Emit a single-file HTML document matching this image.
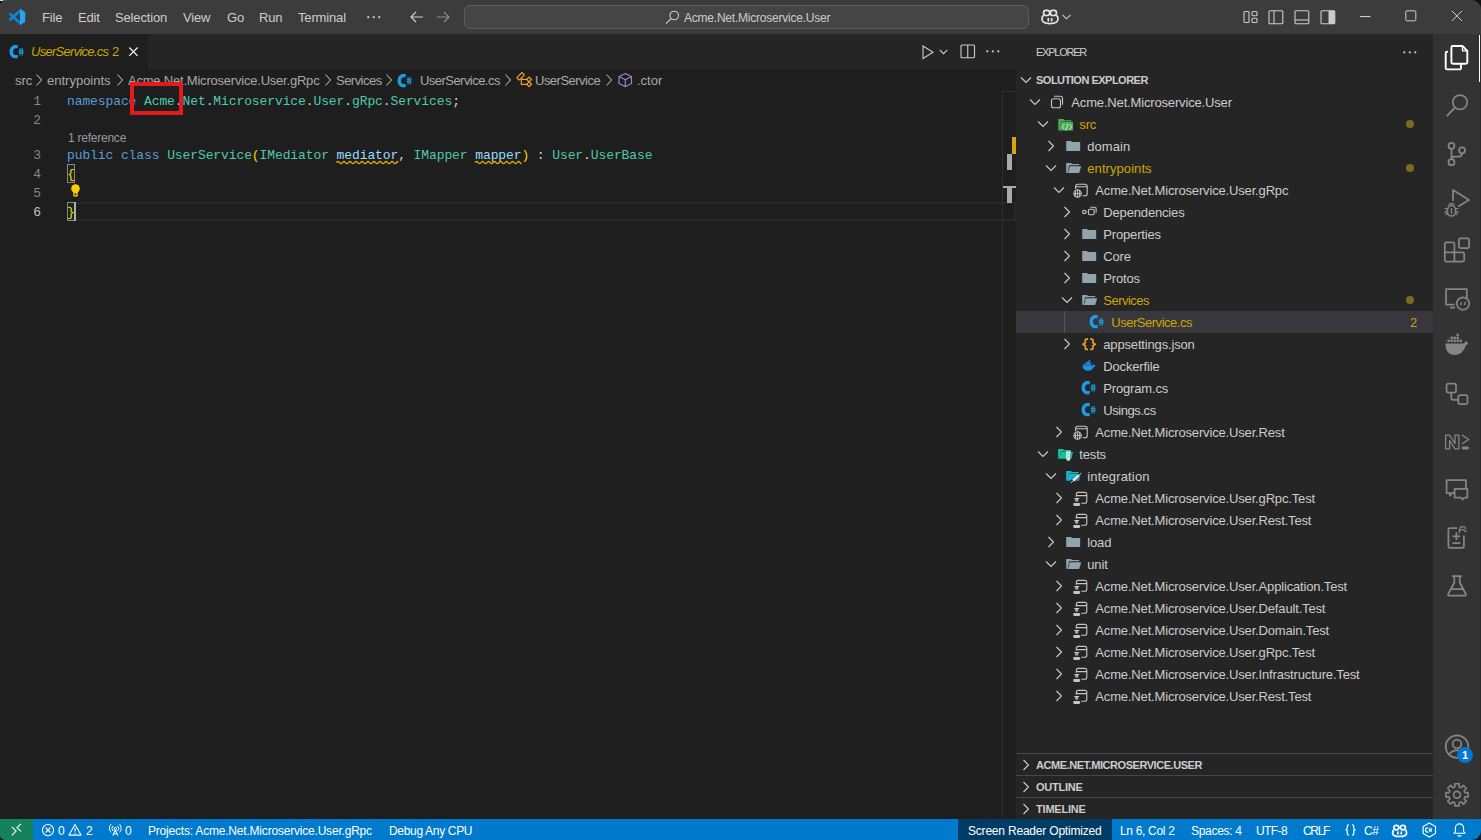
<!DOCTYPE html>
<html><head><meta charset="utf-8">
<style>
*{margin:0;padding:0;box-sizing:border-box}
html,body{width:1481px;height:840px;overflow:hidden;background:#1e1e1e;font-family:"Liberation Sans",sans-serif;color:#cccccc}
.a{position:absolute;white-space:nowrap}
svg{position:absolute;overflow:visible}
#title{position:absolute;left:0;top:0;width:1481px;height:34px;background:#3c3c3c}
.menu{font-size:13px;color:#cccccc;top:9px;line-height:18px;letter-spacing:-0.15px}
#tabs{position:absolute;left:0;top:34px;width:1016px;height:35px;background:#252526}
#tab{position:absolute;left:0;top:0;width:148px;height:35px;background:#1e1e1e}
#side{position:absolute;left:1016px;top:34px;width:417px;height:785px;background:#252526}
#act{position:absolute;left:1433px;top:34px;width:48px;height:785px;background:#333333}
#status{position:absolute;left:0;top:819px;width:1481px;height:21px;background:#007acc}
.st{font-size:12px;color:#ffffff;top:0;line-height:21px;letter-spacing:-0.2px;margin-top:2px}
.bc{font-size:13px;color:#a9a9a9;top:72px;line-height:18px}
.code{font-family:"Liberation Mono",monospace;font-size:13px;letter-spacing:-0.1px;line-height:19px;left:67px}
.ln{font-family:"Liberation Mono",monospace;font-size:13px;letter-spacing:-0.1px;line-height:19px;color:#858585;width:41px;text-align:right;left:0}
.row{font-size:13px;color:#cccccc;line-height:22px;letter-spacing:-0.16px;margin-top:1px}
.kw{color:#569cd6}.ty{color:#4ec9b0}.pa{color:#9cdcfe}.pu{color:#d4d4d4}.br{color:#ffd700}
.sq{text-decoration:underline wavy #cca700;text-decoration-thickness:1px;text-underline-offset:3px}
.ico{stroke:#c5c5c5;fill:none;stroke-width:1}
.sechdr{font-size:11px;font-weight:bold;color:#cccccc;line-height:22px;letter-spacing:-0.5px;margin-top:1px}
</style></head><body>



<!-- TITLE BAR -->
<div id="title"></div>
<div class="a" style="left:1471px;top:0;width:10px;height:10px;background:#111111"></div>
<div class="a" style="left:1461px;top:0;width:20px;height:20px;background:#3c3c3c;border-top-right-radius:9px"></div>
<div class="a" style="left:0;top:0;width:3px;height:1px;background:#e0e0e0"></div>
<div class="a" style="left:4px;top:0;width:2px;height:1px;background:#5a5a5a"></div>
<div class="a" style="left:0;top:1px;width:2px;height:2px;background:#101010"></div>
<!-- vscode logo -->
<svg style="left:9px;top:9px" width="16" height="16" viewBox="0 0 16 16">
  <path d="M1.3 5.2 L11.6 14.6" stroke="#0b84d6" stroke-width="2.7" stroke-linecap="round"/>
  <path d="M1.3 10.6 L11.6 1.3" stroke="#0b84d6" stroke-width="2.7" stroke-linecap="round"/>
  <path d="M11 0.1 L15.4 2.4 Q16.2 2.8 16.2 3.6 V12.4 Q16.2 13.2 15.4 13.6 L11 15.9 Z" fill="#23a6f2"/>
</svg>
<div class="a menu" style="left:42px">File</div>
<div class="a menu" style="left:78px">Edit</div>
<div class="a menu" style="left:115px">Selection</div>
<div class="a menu" style="left:183px">View</div>
<div class="a menu" style="left:227px">Go</div>
<div class="a menu" style="left:259px">Run</div>
<div class="a menu" style="left:298px">Terminal</div>
<svg style="left:367px;top:16px" width="14" height="3"><circle cx="1.2" cy="1.2" r="1.1" fill="#cccccc"/><circle cx="6.7" cy="1.2" r="1.1" fill="#cccccc"/><circle cx="12.2" cy="1.2" r="1.1" fill="#cccccc"/></svg>
<!-- nav arrows -->
<svg style="left:409px;top:10px" width="16" height="14" viewBox="0 0 16 14"><path d="M14 7 H2 M7 2 L2 7 L7 12" stroke="#cccccc" stroke-width="1.2" fill="none"/></svg>
<svg style="left:435px;top:10px" width="16" height="14" viewBox="0 0 16 14"><path d="M2 7 H14 M9 2 L14 7 L9 12" stroke="#8b8b8b" stroke-width="1.2" fill="none"/></svg>
<!-- search box -->
<div class="a" style="left:464px;top:5px;width:565px;height:24px;border:1px solid #5d5d5d;border-radius:6px;background:#454545"></div>
<svg style="left:665px;top:10px" width="15" height="14" viewBox="0 0 15 14"><circle cx="9.2" cy="5.5" r="4.3" stroke="#cccccc" stroke-width="1.1" fill="none"/><path d="M6.2 8.6 L1 13.6" stroke="#cccccc" stroke-width="1.2"/></svg>
<div class="a" style="left:684px;top:10px;font-size:12px;line-height:16px;color:#cccccc;letter-spacing:-0.22px">Acme.Net.Microservice.User</div>
<!-- copilot -->
<svg style="left:1041px;top:9px" width="18" height="16" viewBox="0 0 18 16">
  <path d="M2.6 6.2 C1.4 7 1 8.3 1 10 C1 13.3 4.2 14.6 9 14.6 C13.8 14.6 17 13.3 17 10 C17 8.3 16.6 7 15.4 6.2" stroke="#e6e6e6" stroke-width="1.7" fill="none"/>
  <rect x="2.6" y="1.3" width="6" height="5.2" rx="2.3" stroke="#e6e6e6" stroke-width="1.7" fill="none"/>
  <rect x="9.4" y="1.3" width="6" height="5.2" rx="2.3" stroke="#e6e6e6" stroke-width="1.7" fill="none"/>
  <path d="M7.3 9 V12.6 M10.7 9 V12.6" stroke="#e6e6e6" stroke-width="1.7"/>
</svg>
<svg style="left:1062px;top:14px" width="9" height="6" viewBox="0 0 9 6"><path d="M0.5 0.8 L4.5 4.8 L8.5 0.8" stroke="#cccccc" stroke-width="1.1" fill="none"/></svg>
<!-- layout icons -->
<svg style="left:1243px;top:10px" width="15" height="14" viewBox="0 0 15 14"><rect x="1" y="1.5" width="5" height="11" rx="1" class="ico" style="stroke:#cccccc;stroke-width:1.1"/><rect x="9" y="1.5" width="5" height="4.3" rx="1" class="ico" style="stroke:#cccccc;stroke-width:1.1"/><rect x="9" y="8.2" width="5" height="4.3" rx="1" class="ico" style="stroke:#cccccc;stroke-width:1.1"/></svg>
<svg style="left:1268px;top:10px" width="16" height="15" viewBox="0 0 16 15"><rect x="1" y="0.8" width="13.8" height="13" rx="1" class="ico" style="stroke:#cccccc;stroke-width:1.1"/><path d="M6 0.8 V13.8" stroke="#cccccc" stroke-width="1.1"/></svg>
<svg style="left:1294px;top:10px" width="16" height="15" viewBox="0 0 16 15"><rect x="1" y="0.8" width="13.8" height="13" rx="1" class="ico" style="stroke:#cccccc;stroke-width:1.1"/><path d="M1 10 H14.8" stroke="#cccccc" stroke-width="1.1"/></svg>
<svg style="left:1320px;top:10px" width="16" height="15" viewBox="0 0 16 15"><rect x="1" y="0.8" width="13.8" height="13" rx="1" class="ico" style="stroke:#cccccc;stroke-width:1.1"/><rect x="8.5" y="0.8" width="6.3" height="13" fill="#cccccc"/></svg>
<!-- window controls -->
<svg style="left:1360px;top:16px" width="11" height="2"><rect x="0" y="0" width="10.5" height="1.1" fill="#cccccc"/></svg>
<svg style="left:1405px;top:10px" width="12" height="12" viewBox="0 0 12 12"><rect x="0.8" y="0.8" width="10" height="10" rx="1.2" stroke="#cccccc" stroke-width="1" fill="none"/></svg>
<svg style="left:1451px;top:10px" width="12" height="12" viewBox="0 0 12 12"><path d="M0.8 0.8 L11 11 M11 0.8 L0.8 11" stroke="#cccccc" stroke-width="1"/></svg>

<!-- TABS -->
<div id="tabs"><div id="tab"></div></div>
<svg style="left:10.4px;top:43.8px" width="16" height="16" viewBox="0 0 16 16"><path d="M7.7 1 H5.6 C2.1 1 -0.4 3.7 -0.4 7.65 C-0.4 11.6 2.1 14.3 5.6 14.3 H7.7 V11.1 H5.8 C4.2 11.1 3 9.7 3 7.65 C3 5.6 4.2 4.2 5.8 4.2 H7.7 Z" fill="#1b9de6"/>
  <path d="M10.1 4.1 V11.4 M12.2 4.1 V11.4 M8.6 6.75 H13.7 M8.6 8.7 H13.7" stroke="#1b9de6" stroke-width="1.1"/></svg>
<div class="a" style="left:31px;top:43px;font-size:13px;line-height:18px;font-style:italic;color:#cca700;letter-spacing:-0.72px">UserService.cs</div>
<div class="a" style="left:112px;top:43px;font-size:13px;line-height:18px;color:#cca700">2</div>
<svg style="left:128px;top:46px" width="11" height="11" viewBox="0 0 11 11"><path d="M1.3 1.5 L9.6 9.8 M9.6 1.5 L1.3 9.8" stroke="#ffffff" stroke-width="1.15"/></svg>
<!-- editor actions -->
<svg style="left:922px;top:45px" width="12" height="15" viewBox="0 0 12 15"><path d="M1 1 L11 7.2 L1 13.5 Z" stroke="#cccccc" stroke-width="1.1" fill="none"/></svg>
<svg style="left:939px;top:49px" width="10" height="6" viewBox="0 0 10 6"><path d="M0.8 0.8 L4.5 4.6 L8.3 0.8" stroke="#cccccc" stroke-width="1.1" fill="none"/></svg>
<svg style="left:960px;top:44px" width="16" height="15" viewBox="0 0 16 15"><rect x="1" y="1" width="13.5" height="12.8" rx="1" stroke="#cccccc" stroke-width="1.1" fill="none"/><path d="M7.75 1 V13.8" stroke="#cccccc" stroke-width="1.1"/></svg>
<svg style="left:986px;top:50px" width="14" height="3"><circle cx="1.3" cy="1.3" r="1.1" fill="#cccccc"/><circle cx="6.8" cy="1.3" r="1.1" fill="#cccccc"/><circle cx="12.3" cy="1.3" r="1.1" fill="#cccccc"/></svg>

<!-- BREADCRUMBS -->
<svg style="left:398.3px;top:73px" width="16" height="16" viewBox="0 0 16 16"><path d="M7.7 1 H5.6 C2.1 1 -0.4 3.7 -0.4 7.65 C-0.4 11.6 2.1 14.3 5.6 14.3 H7.7 V11.1 H5.8 C4.2 11.1 3 9.7 3 7.65 C3 5.6 4.2 4.2 5.8 4.2 H7.7 Z" fill="#1b9de6"/>
  <path d="M10.1 4.1 V11.4 M12.2 4.1 V11.4 M8.6 6.75 H13.7 M8.6 8.7 H13.7" stroke="#1b9de6" stroke-width="1.1"/></svg>
<div class="a bc" style="left:15px">src</div>
<div class="a bc" style="left:47px">entrypoints</div>
<div class="a bc" style="left:128px;letter-spacing:-0.21px">Acme.Net.Microservice.User.gRpc</div>
<div class="a bc" style="left:336px;letter-spacing:-0.53px">Services</div>
<div class="a bc" style="left:420px;letter-spacing:-0.54px">UserService.cs</div>
<div class="a bc" style="left:535px;letter-spacing:-0.51px">UserService</div>
<div class="a bc" style="left:637px">.ctor</div>
<svg style="left:0;top:0" width="700" height="95" viewBox="0 0 700 95">
  <g stroke="#a9a9a9" stroke-width="1.1" fill="none">
    <path d="M36.5 74.5 L41.5 80 L36.5 85.5"/>
    <path d="M117.5 74.5 L122.5 80 L117.5 85.5"/>
    <path d="M325.5 74.5 L330.5 80 L325.5 85.5"/>
    <path d="M386.5 74.5 L391.5 80 L386.5 85.5"/>
    <path d="M505.5 74.5 L510.5 80 L505.5 85.5"/>
    <path d="M606.5 74.5 L611.5 80 L606.5 85.5"/>
  </g>
  <!-- class icon -->
  <g stroke="#ee9d28" stroke-width="1.2" fill="none">
    <rect x="516.9" y="74.6" width="7.4" height="3.4" rx="0.4" transform="rotate(-45 520.6 76.3)"/>
    <path d="M521.3 78.3 V84.3 H527.2 M521.3 79.4 H527.2"/>
    <rect x="527.4" y="77.8" width="3.4" height="3.4" transform="rotate(45 529.1 79.5)"/>
    <rect x="527.4" y="82.6" width="3.4" height="3.4" transform="rotate(45 529.1 84.3)"/>
  </g>
  <!-- method cube -->
  <g stroke="#b180d7" stroke-width="1.1" fill="none">
    <path d="M625.3 73.5 L631.5 76.5 V83.5 L625.3 86.7 L619 83.5 V76.5 Z M619 76.5 L625.3 79.7 L631.5 76.5 M625.3 79.7 V86.7"/>
  </g>
</svg>

<!-- EDITOR CODE -->
<div class="a ln" style="top:92px">1</div>
<div class="a ln" style="top:111px">2</div>
<div class="a ln" style="top:146px">3</div>
<div class="a ln" style="top:165px">4</div>
<div class="a ln" style="top:184px">5</div>
<div class="a ln" style="top:203px;color:#c6c6c6">6</div>

<!-- current line highlight -->


<div class="a code" style="top:92px"><span class="kw">namespace</span> <span class="ty">Acme</span><span class="pu">.</span><span class="ty">Net</span><span class="pu">.</span><span class="ty">Microservice</span><span class="pu">.</span><span class="ty">User</span><span class="pu">.</span><span class="ty">gRpc</span><span class="pu">.</span><span class="ty">Services</span><span class="pu">;</span></div>
<div class="a" style="left:68px;top:129.5px;font-size:12px;line-height:17px;color:#999999;letter-spacing:-0.24px">1 reference</div>
<div class="a code" style="top:146px"><span class="kw">public</span> <span class="kw">class</span> <span class="ty">UserService</span><span class="br">(</span><span class="ty">IMediator</span> <span class="pa">mediator</span><span class="pu">,</span> <span class="ty">IMapper</span> <span class="pa">mapper</span><span class="br">)</span> <span class="pu">:</span> <span class="ty">User</span><span class="pu">.</span><span class="ty">UserBase</span></div>
<svg style="left:0;top:0" width="600" height="200" viewBox="0 0 600 200"><path d="M336.5 162.6 Q338.00 160.4 339.50 162.6 Q341.00 164.79999999999998 342.50 162.6 Q344.00 160.4 345.50 162.6 Q347.00 164.79999999999998 348.50 162.6 Q350.00 160.4 351.50 162.6 Q353.00 164.79999999999998 354.50 162.6 Q356.00 160.4 357.50 162.6 Q359.00 164.79999999999998 360.50 162.6 Q362.00 160.4 363.50 162.6 Q365.00 164.79999999999998 366.50 162.6 Q368.00 160.4 369.50 162.6 Q371.00 164.79999999999998 372.50 162.6 Q374.00 160.4 375.50 162.6 Q377.00 164.79999999999998 378.50 162.6 Q380.00 160.4 381.50 162.6 Q383.00 164.79999999999998 384.50 162.6 Q386.00 160.4 387.50 162.6 Q389.00 164.79999999999998 390.50 162.6 Q392.00 160.4 393.50 162.6 Q395.00 164.79999999999998 396.50 162.6 Q397.30 160.4 398.10 162.6 M475.1 162.6 Q476.60 160.4 478.10 162.6 Q479.60 164.79999999999998 481.10 162.6 Q482.60 160.4 484.10 162.6 Q485.60 164.79999999999998 487.10 162.6 Q488.60 160.4 490.10 162.6 Q491.60 164.79999999999998 493.10 162.6 Q494.60 160.4 496.10 162.6 Q497.60 164.79999999999998 499.10 162.6 Q500.60 160.4 502.10 162.6 Q503.60 164.79999999999998 505.10 162.6 Q506.60 160.4 508.10 162.6 Q509.60 164.79999999999998 511.10 162.6 Q512.60 160.4 514.10 162.6 Q515.60 164.79999999999998 517.10 162.6 Q518.60 160.4 520.10 162.6 Q520.70 164.79999999999998 521.30 162.6" stroke="#d7a800" stroke-width="1.3" fill="none"/></svg>
<!-- brace boxes -->
<div class="a" style="left:67px;top:164px;width:8px;height:19px;border:1px solid #888888;background:#14281c"></div>
<div class="a" style="left:67px;top:202px;width:9px;height:19px;border:1px solid #888888;background:#14281c"></div>
<div class="a code" style="top:165px"><span class="br">{</span></div>
<div class="a code" style="top:203px"><span class="br">}</span></div>
<div class="a" style="left:74px;top:202px;width:2px;height:19px;background:#aeafad"></div>
<!-- lightbulb -->
<svg style="left:70px;top:184px" width="11" height="13" viewBox="0 0 11 13"><circle cx="5.5" cy="4.6" r="4.3" fill="#ffcc00"/><rect x="3.3" y="7.5" width="4.4" height="5" fill="#ffcc00"/><rect x="4.5" y="9.5" width="2" height="1.6" fill="#1e1e1e"/></svg>

<!-- red annotation box -->
<div class="a" style="left:130px;top:82px;width:53px;height:33px;border:4px solid #e31b1b"></div>

<div class="a" style="left:76px;top:202px;width:940px;height:19px;border-top:2px solid #282828;border-bottom:2px solid #282828;border-right:2px solid #282828"></div>
<!-- overview ruler -->
<div class="a" style="left:1002px;top:91px;width:14px;height:728px;border-left:1px solid #2f2f2f;border-top:1px solid #2f2f2f"></div>
<div class="a" style="left:1012px;top:137px;width:4px;height:17px;background:#d4a70f"></div>
<div class="a" style="left:1007px;top:154px;width:5px;height:16px;background:#a9a9a9"></div>
<div class="a" style="left:1003px;top:186px;width:13px;height:2px;background:#a9a9a9"></div>
<div class="a" style="left:1007px;top:188px;width:5px;height:15px;background:#a9a9a9"></div>

<!-- SIDEBAR -->
<div id="side"></div>
<div class="a" style="left:1036px;top:44px;font-size:11px;line-height:17px;color:#cccccc;letter-spacing:-1.25px">EXPLORER</div>
<svg style="left:1403px;top:51px" width="14" height="3"><circle cx="1.3" cy="1.3" r="1.1" fill="#cccccc"/><circle cx="6.8" cy="1.3" r="1.1" fill="#cccccc"/><circle cx="12.3" cy="1.3" r="1.1" fill="#cccccc"/></svg>
<svg style="left:1020px;top:76px" width="12" height="8" viewBox="0 0 12 8"><path d="M1 1.5 L6 6.5 L11 1.5" stroke="#cccccc" stroke-width="1.1" fill="none"/></svg>
<div class="a sechdr" style="left:1036px;top:68px">SOLUTION EXPLORER</div>

<div class="a" style="left:1016px;top:311px;width:417px;height:22px;background:#37373d"></div>
<div class="a" style="left:1064px;top:311px;width:1px;height:22px;background:#585858"></div>
<svg style="left:1029.0px;top:98px" width="12" height="8" viewBox="0 0 12 8"><path d="M1 1.5 L6 6.5 L11 1.5" stroke="#cccccc" stroke-width="1.1" fill="none"/></svg>
<svg style="left:1049.8px;top:94px" width="16" height="16" viewBox="0 0 16 16"><rect x="1.5" y="4.8" width="9" height="9" rx="2" fill="none" stroke="#c5c5c5" stroke-width="1.1"/>
  <path d="M4 2.3 H10.5 A2 2 0 0 1 12.5 4.3 V10.8" fill="none" stroke="#c5c5c5" stroke-width="1.1"/></svg>
<div class="a row" style="left:1071.3px;top:91px;color:#cccccc">Acme.Net.Microservice.User</div>
<svg style="left:1037.0px;top:120px" width="12" height="8" viewBox="0 0 12 8"><path d="M1 1.5 L6 6.5 L11 1.5" stroke="#cccccc" stroke-width="1.1" fill="none"/></svg>
<svg style="left:1057.8px;top:116px" width="16" height="16" viewBox="0 0 16 16"><path d="M0.3 3 H5.5 L6.8 4.2 H13.5 V5.5 H3 L1.5 14.5 H0.3 Z" fill="#4caf50"/>
  <path d="M1.5 14.5 L3 6 H15 V14.5 Z" fill="#4caf50"/>
  <path d="M6.5 8 L4.2 10.8 L6.5 13.6 M11.5 8 L13.8 10.8 L11.5 13.6 M9.8 7.5 L8.2 14.5" stroke="#d7ecd7" stroke-width="1" fill="none"/></svg>
<div class="a row" style="left:1079.3px;top:113px;color:#cca700">src</div>
<div class="a" style="left:1406px;top:120px;width:8px;height:8px;border-radius:4px;background:#7f6a1f"></div>
<svg style="left:1047.0px;top:140px" width="8" height="12" viewBox="0 0 8 12"><path d="M1.5 1 L6.5 6 L1.5 11" stroke="#cccccc" stroke-width="1.1" fill="none"/></svg>
<svg style="left:1065.8px;top:138px" width="16" height="16" viewBox="0 0 16 16"><path d="M0.2 3.2 Q0.2 3 0.5 3 H5 L6 4 H13.8 Q14.2 4 14.2 4.4 V12.6 Q14.2 13 13.8 13 H0.6 Q0.2 13 0.2 12.6 Z" fill="#90a4ae"/></svg>
<div class="a row" style="left:1087.3px;top:135px;color:#cccccc;letter-spacing:0.05px">domain</div>
<svg style="left:1045.0px;top:164px" width="12" height="8" viewBox="0 0 12 8"><path d="M1 1.5 L6 6.5 L11 1.5" stroke="#cccccc" stroke-width="1.1" fill="none"/></svg>
<svg style="left:1065.8px;top:160px" width="16" height="16" viewBox="0 0 16 16"><path d="M0.2 3 H5 L6 4 H13.2 V5.3 H3.2 L1.6 13 H0.2 Z" fill="#90a4ae"/>
  <path d="M2 13 L3.8 6.2 H15.2 L13.2 13 Z" fill="#90a4ae"/></svg>
<div class="a row" style="left:1087.3px;top:157px;color:#cca700;letter-spacing:0.07px">entrypoints</div>
<div class="a" style="left:1406px;top:164px;width:8px;height:8px;border-radius:4px;background:#7f6a1f"></div>
<svg style="left:1053.0px;top:186px" width="12" height="8" viewBox="0 0 12 8"><path d="M1 1.5 L6 6.5 L11 1.5" stroke="#cccccc" stroke-width="1.1" fill="none"/></svg>
<svg style="left:1073.8px;top:182px" width="16" height="16" viewBox="0 0 16 16"><path d="M1.6 7 V4.2 A2 2 0 0 1 3.6 2.2 H11.2 A2 2 0 0 1 13.2 4.2 V11.8 A2 2 0 0 1 11.2 13.8 H8.6 M1.6 4.8 H13.2" fill="none" stroke="#c5c5c5" stroke-width="1.1"/>
  <circle cx="3.6" cy="11.5" r="4.6" fill="#252526"/>
  <circle cx="3.6" cy="11.5" r="3.7" fill="none" stroke="#c5c5c5" stroke-width="1.1"/>
  <path d="M-0.1 11.5 H7.3 M3.6 7.8 V15.2 M1.9 8.3 Q0.9 11.5 1.9 14.7 M5.3 8.3 Q6.3 11.5 5.3 14.7" stroke="#c5c5c5" stroke-width="0.9" fill="none"/></svg>
<div class="a row" style="left:1095.3px;top:179px;color:#cccccc">Acme.Net.Microservice.User.gRpc</div>
<svg style="left:1063.0px;top:206px" width="8" height="12" viewBox="0 0 8 12"><path d="M1.5 1 L6.5 6 L1.5 11" stroke="#cccccc" stroke-width="1.1" fill="none"/></svg>
<svg style="left:1081.8px;top:204px" width="16" height="16" viewBox="0 0 16 16"><circle cx="2.3" cy="7.9" r="1.7" fill="none" stroke="#c5c5c5" stroke-width="1.1"/>
  <path d="M4 7.9 H6.4" stroke="#c5c5c5" stroke-width="0.8" opacity="0.6"/>
  <rect x="6.5" y="5.2" width="5.6" height="5.5" rx="1.1" fill="none" stroke="#c5c5c5" stroke-width="1.1"/>
  <path d="M8.3 3.3 H13 A1.1 1.1 0 0 1 14.1 4.4 V8.8" fill="none" stroke="#c5c5c5" stroke-width="1.1"/></svg>
<div class="a row" style="left:1103.3px;top:201px;color:#cccccc">Dependencies</div>
<svg style="left:1063.0px;top:228px" width="8" height="12" viewBox="0 0 8 12"><path d="M1.5 1 L6.5 6 L1.5 11" stroke="#cccccc" stroke-width="1.1" fill="none"/></svg>
<svg style="left:1081.8px;top:226px" width="16" height="16" viewBox="0 0 16 16"><path d="M0.2 3.2 Q0.2 3 0.5 3 H5 L6 4 H13.8 Q14.2 4 14.2 4.4 V12.6 Q14.2 13 13.8 13 H0.6 Q0.2 13 0.2 12.6 Z" fill="#90a4ae"/></svg>
<div class="a row" style="left:1103.3px;top:223px;color:#cccccc">Properties</div>
<svg style="left:1063.0px;top:250px" width="8" height="12" viewBox="0 0 8 12"><path d="M1.5 1 L6.5 6 L1.5 11" stroke="#cccccc" stroke-width="1.1" fill="none"/></svg>
<svg style="left:1081.8px;top:248px" width="16" height="16" viewBox="0 0 16 16"><path d="M0.2 3.2 Q0.2 3 0.5 3 H5 L6 4 H13.8 Q14.2 4 14.2 4.4 V12.6 Q14.2 13 13.8 13 H0.6 Q0.2 13 0.2 12.6 Z" fill="#90a4ae"/></svg>
<div class="a row" style="left:1103.3px;top:245px;color:#cccccc">Core</div>
<svg style="left:1063.0px;top:272px" width="8" height="12" viewBox="0 0 8 12"><path d="M1.5 1 L6.5 6 L1.5 11" stroke="#cccccc" stroke-width="1.1" fill="none"/></svg>
<svg style="left:1081.8px;top:270px" width="16" height="16" viewBox="0 0 16 16"><path d="M0.2 3.2 Q0.2 3 0.5 3 H5 L6 4 H13.8 Q14.2 4 14.2 4.4 V12.6 Q14.2 13 13.8 13 H0.6 Q0.2 13 0.2 12.6 Z" fill="#90a4ae"/></svg>
<div class="a row" style="left:1103.3px;top:267px;color:#cccccc">Protos</div>
<svg style="left:1061.0px;top:296px" width="12" height="8" viewBox="0 0 12 8"><path d="M1 1.5 L6 6.5 L11 1.5" stroke="#cccccc" stroke-width="1.1" fill="none"/></svg>
<svg style="left:1081.8px;top:292px" width="16" height="16" viewBox="0 0 16 16"><path d="M0.2 3 H5 L6 4 H13.2 V5.3 H3.2 L1.6 13 H0.2 Z" fill="#90a4ae"/>
  <path d="M2 13 L3.8 6.2 H15.2 L13.2 13 Z" fill="#90a4ae"/></svg>
<div class="a row" style="left:1103.3px;top:289px;color:#cca700;letter-spacing:-0.53px">Services</div>
<div class="a" style="left:1406px;top:296px;width:8px;height:8px;border-radius:4px;background:#7f6a1f"></div>
<svg style="left:1089.8px;top:314px" width="16" height="16" viewBox="0 0 16 16"><path d="M7.7 1 H5.6 C2.1 1 -0.4 3.7 -0.4 7.65 C-0.4 11.6 2.1 14.3 5.6 14.3 H7.7 V11.1 H5.8 C4.2 11.1 3 9.7 3 7.65 C3 5.6 4.2 4.2 5.8 4.2 H7.7 Z" fill="#1b9de6"/>
  <path d="M10.1 4.1 V11.4 M12.2 4.1 V11.4 M8.6 6.75 H13.7 M8.6 8.7 H13.7" stroke="#1b9de6" stroke-width="1.1"/></svg>
<div class="a row" style="left:1111.3px;top:311px;color:#cca700;letter-spacing:-0.48px">UserService.cs</div>
<svg style="left:1063.0px;top:338px" width="8" height="12" viewBox="0 0 8 12"><path d="M1.5 1 L6.5 6 L1.5 11" stroke="#cccccc" stroke-width="1.1" fill="none"/></svg>
<svg style="left:1081.8px;top:336px" width="16" height="16" viewBox="0 0 16 16"><path d="M6 3.2 H4.4 Q3.3 3.2 3.3 4.3 V6.8 L1 8.3 L3.3 9.8 V12.2 Q3.3 13.3 4.4 13.3 H6 M8.2 3.2 H9.8 Q10.9 3.2 10.9 4.3 V6.8 L13.2 8.3 L10.9 9.8 V12.2 Q10.9 13.3 9.8 13.3 H8.2" fill="none" stroke="#f0a024" stroke-width="1.7" stroke-linejoin="round"/></svg>
<div class="a row" style="left:1103.3px;top:333px;color:#cccccc">appsettings.json</div>
<svg style="left:1081.8px;top:358px" width="16" height="16" viewBox="0 0 16 16"><path d="M0.3 7.6 H10.8 Q11.6 6.4 12.6 6.6 Q13 7.4 12.8 7.9 Q13.4 8 13.7 7.7 Q13.2 9 11.6 9.2 Q10.2 12.7 5.8 12.7 Q1 12.7 0.3 7.6 Z" fill="#1d91e6"/>
  <path d="M1.8 7.6 V5.6 H9.6 V7.6 Z M4.2 5.6 V3.8 H8.3 V5.6 Z M6.4 3.8 V2.3 H8.1 V3.8 Z" fill="#1d91e6"/>
  <path d="M3.5 5.5 V7.5 M5.4 5.5 V7.5 M7.3 3.7 V7.5 M9.1 5.5 V7.5 M4.2 5.6 H9.6 M4.2 3.8 H8.3" stroke="#252526" stroke-width="0.35" opacity="0.5"/></svg>
<div class="a row" style="left:1103.3px;top:355px;color:#cccccc">Dockerfile</div>
<svg style="left:1081.8px;top:380px" width="16" height="16" viewBox="0 0 16 16"><path d="M7.7 1 H5.6 C2.1 1 -0.4 3.7 -0.4 7.65 C-0.4 11.6 2.1 14.3 5.6 14.3 H7.7 V11.1 H5.8 C4.2 11.1 3 9.7 3 7.65 C3 5.6 4.2 4.2 5.8 4.2 H7.7 Z" fill="#1b9de6"/>
  <path d="M10.1 4.1 V11.4 M12.2 4.1 V11.4 M8.6 6.75 H13.7 M8.6 8.7 H13.7" stroke="#1b9de6" stroke-width="1.1"/></svg>
<div class="a row" style="left:1103.3px;top:377px;color:#cccccc">Program.cs</div>
<svg style="left:1081.8px;top:402px" width="16" height="16" viewBox="0 0 16 16"><path d="M7.7 1 H5.6 C2.1 1 -0.4 3.7 -0.4 7.65 C-0.4 11.6 2.1 14.3 5.6 14.3 H7.7 V11.1 H5.8 C4.2 11.1 3 9.7 3 7.65 C3 5.6 4.2 4.2 5.8 4.2 H7.7 Z" fill="#1b9de6"/>
  <path d="M10.1 4.1 V11.4 M12.2 4.1 V11.4 M8.6 6.75 H13.7 M8.6 8.7 H13.7" stroke="#1b9de6" stroke-width="1.1"/></svg>
<div class="a row" style="left:1103.3px;top:399px;color:#cccccc;letter-spacing:-0.44px">Usings.cs</div>
<svg style="left:1055.0px;top:426px" width="8" height="12" viewBox="0 0 8 12"><path d="M1.5 1 L6.5 6 L1.5 11" stroke="#cccccc" stroke-width="1.1" fill="none"/></svg>
<svg style="left:1073.8px;top:424px" width="16" height="16" viewBox="0 0 16 16"><path d="M1.6 7 V4.2 A2 2 0 0 1 3.6 2.2 H11.2 A2 2 0 0 1 13.2 4.2 V11.8 A2 2 0 0 1 11.2 13.8 H8.6 M1.6 4.8 H13.2" fill="none" stroke="#c5c5c5" stroke-width="1.1"/>
  <circle cx="3.6" cy="11.5" r="4.6" fill="#252526"/>
  <circle cx="3.6" cy="11.5" r="3.7" fill="none" stroke="#c5c5c5" stroke-width="1.1"/>
  <path d="M-0.1 11.5 H7.3 M3.6 7.8 V15.2 M1.9 8.3 Q0.9 11.5 1.9 14.7 M5.3 8.3 Q6.3 11.5 5.3 14.7" stroke="#c5c5c5" stroke-width="0.9" fill="none"/></svg>
<div class="a row" style="left:1095.3px;top:421px;color:#cccccc">Acme.Net.Microservice.User.Rest</div>
<svg style="left:1037.0px;top:450px" width="12" height="8" viewBox="0 0 12 8"><path d="M1 1.5 L6 6.5 L11 1.5" stroke="#cccccc" stroke-width="1.1" fill="none"/></svg>
<svg style="left:1057.8px;top:446px" width="16" height="16" viewBox="0 0 16 16"><path d="M0.1 3 H5 L6 4 H12.8 V5.6 H3 L1.5 12.7 H0.1 Z" fill="#17c2a0"/>
  <path d="M1.5 12.7 L2.8 6.6 Q3 5.9 3.7 5.9 H15 L13.3 12.7 Z" fill="#17c2a0"/>
  <path d="M7 5.4 H13.6 V6.9 H12.8 V12.9 A2.4 2.4 0 0 1 8 12.9 V6.9 H7 Z" fill="#252526" transform="translate(0 -0.4)"/>
  <path d="M7.5 5.9 H13.1 M8.7 5.9 V12.6 A1.6 1.6 0 0 0 11.9 12.6 V5.9" fill="#c8f5e8" stroke="#c8f5e8" stroke-width="1.2"/>
  <circle cx="10.1" cy="8.1" r="0.7" fill="#17c2a0"/><circle cx="10.7" cy="10.2" r="0.5" fill="#17c2a0"/><circle cx="9.9" cy="12.1" r="0.5" fill="#17c2a0"/></svg>
<div class="a row" style="left:1079.3px;top:443px;color:#cccccc">tests</div>
<svg style="left:1045.0px;top:472px" width="12" height="8" viewBox="0 0 12 8"><path d="M1 1.5 L6 6.5 L11 1.5" stroke="#cccccc" stroke-width="1.1" fill="none"/></svg>
<svg style="left:1065.8px;top:468px" width="16" height="16" viewBox="0 0 16 16"><path d="M0.2 3 H5 L6 4 H13 V5.6 H3.2 L1.6 12.7 H0.2 Z" fill="#1ab4d0"/>
  <path d="M1.6 12.7 L2.9 6.6 Q3.1 5.9 3.8 5.9 H14.8 L13 12.7 Z" fill="#1ab4d0"/>
  <path d="M4.6 15.2 L15.6 4.8" stroke="#252526" stroke-width="4.2"/>
  <path d="M4.9 14.9 L15.3 5.1" stroke="#c5eef5" stroke-width="1"/>
  <path d="M7.4 12.4 L12.7 7.4" stroke="#c5eef5" stroke-width="3"/>
  <path d="M8.6 13.2 L6.6 11.2 M13.6 8.3 L11.6 6.3" stroke="#c5eef5" stroke-width="1"/></svg>
<div class="a row" style="left:1087.3px;top:465px;color:#cccccc;letter-spacing:0.15px">integration</div>
<svg style="left:1055.0px;top:492px" width="8" height="12" viewBox="0 0 8 12"><path d="M1.5 1 L6.5 6 L1.5 11" stroke="#cccccc" stroke-width="1.1" fill="none"/></svg>
<svg style="left:1073.8px;top:490px" width="16" height="16" viewBox="0 0 16 16"><path d="M2.3 6.8 V4.4 A2 2 0 0 1 4.3 2.4 H10.8 A2 2 0 0 1 12.8 4.4 V11.3 A2 2 0 0 1 10.8 13.3 H7.2 M2.3 5.6 H12.8" fill="none" stroke="#c5c5c5" stroke-width="1.1"/>
  <path d="M0.2 8.1 H5.2 V8.9 H4.2 V11.6 H1.2 V8.9 H0.2 Z" fill="#c5c5c5"/>
  <path d="M2.2 9 V11.4 M3.2 9 V11.4" stroke="#252526" stroke-width="0.4" opacity="0.5"/>
  <rect x="-0.8" y="12.9" width="7" height="3" rx="1.3" fill="#c5c5c5"/></svg>
<div class="a row" style="left:1095.3px;top:487px;color:#cccccc">Acme.Net.Microservice.User.gRpc.Test</div>
<svg style="left:1055.0px;top:514px" width="8" height="12" viewBox="0 0 8 12"><path d="M1.5 1 L6.5 6 L1.5 11" stroke="#cccccc" stroke-width="1.1" fill="none"/></svg>
<svg style="left:1073.8px;top:512px" width="16" height="16" viewBox="0 0 16 16"><path d="M2.3 6.8 V4.4 A2 2 0 0 1 4.3 2.4 H10.8 A2 2 0 0 1 12.8 4.4 V11.3 A2 2 0 0 1 10.8 13.3 H7.2 M2.3 5.6 H12.8" fill="none" stroke="#c5c5c5" stroke-width="1.1"/>
  <path d="M0.2 8.1 H5.2 V8.9 H4.2 V11.6 H1.2 V8.9 H0.2 Z" fill="#c5c5c5"/>
  <path d="M2.2 9 V11.4 M3.2 9 V11.4" stroke="#252526" stroke-width="0.4" opacity="0.5"/>
  <rect x="-0.8" y="12.9" width="7" height="3" rx="1.3" fill="#c5c5c5"/></svg>
<div class="a row" style="left:1095.3px;top:509px;color:#cccccc">Acme.Net.Microservice.User.Rest.Test</div>
<svg style="left:1047.0px;top:536px" width="8" height="12" viewBox="0 0 8 12"><path d="M1.5 1 L6.5 6 L1.5 11" stroke="#cccccc" stroke-width="1.1" fill="none"/></svg>
<svg style="left:1065.8px;top:534px" width="16" height="16" viewBox="0 0 16 16"><path d="M0.2 3.2 Q0.2 3 0.5 3 H5 L6 4 H13.8 Q14.2 4 14.2 4.4 V12.6 Q14.2 13 13.8 13 H0.6 Q0.2 13 0.2 12.6 Z" fill="#90a4ae"/></svg>
<div class="a row" style="left:1087.3px;top:531px;color:#cccccc">load</div>
<svg style="left:1045.0px;top:560px" width="12" height="8" viewBox="0 0 12 8"><path d="M1 1.5 L6 6.5 L11 1.5" stroke="#cccccc" stroke-width="1.1" fill="none"/></svg>
<svg style="left:1065.8px;top:556px" width="16" height="16" viewBox="0 0 16 16"><path d="M0.2 3 H5 L6 4 H13.2 V5.3 H3.2 L1.6 13 H0.2 Z" fill="#90a4ae"/>
  <path d="M2 13 L3.8 6.2 H15.2 L13.2 13 Z" fill="#90a4ae"/></svg>
<div class="a row" style="left:1087.3px;top:553px;color:#cccccc">unit</div>
<svg style="left:1055.0px;top:580px" width="8" height="12" viewBox="0 0 8 12"><path d="M1.5 1 L6.5 6 L1.5 11" stroke="#cccccc" stroke-width="1.1" fill="none"/></svg>
<svg style="left:1073.8px;top:578px" width="16" height="16" viewBox="0 0 16 16"><path d="M2.3 6.8 V4.4 A2 2 0 0 1 4.3 2.4 H10.8 A2 2 0 0 1 12.8 4.4 V11.3 A2 2 0 0 1 10.8 13.3 H7.2 M2.3 5.6 H12.8" fill="none" stroke="#c5c5c5" stroke-width="1.1"/>
  <path d="M0.2 8.1 H5.2 V8.9 H4.2 V11.6 H1.2 V8.9 H0.2 Z" fill="#c5c5c5"/>
  <path d="M2.2 9 V11.4 M3.2 9 V11.4" stroke="#252526" stroke-width="0.4" opacity="0.5"/>
  <rect x="-0.8" y="12.9" width="7" height="3" rx="1.3" fill="#c5c5c5"/></svg>
<div class="a row" style="left:1095.3px;top:575px;color:#cccccc">Acme.Net.Microservice.User.Application.Test</div>
<svg style="left:1055.0px;top:602px" width="8" height="12" viewBox="0 0 8 12"><path d="M1.5 1 L6.5 6 L1.5 11" stroke="#cccccc" stroke-width="1.1" fill="none"/></svg>
<svg style="left:1073.8px;top:600px" width="16" height="16" viewBox="0 0 16 16"><path d="M2.3 6.8 V4.4 A2 2 0 0 1 4.3 2.4 H10.8 A2 2 0 0 1 12.8 4.4 V11.3 A2 2 0 0 1 10.8 13.3 H7.2 M2.3 5.6 H12.8" fill="none" stroke="#c5c5c5" stroke-width="1.1"/>
  <path d="M0.2 8.1 H5.2 V8.9 H4.2 V11.6 H1.2 V8.9 H0.2 Z" fill="#c5c5c5"/>
  <path d="M2.2 9 V11.4 M3.2 9 V11.4" stroke="#252526" stroke-width="0.4" opacity="0.5"/>
  <rect x="-0.8" y="12.9" width="7" height="3" rx="1.3" fill="#c5c5c5"/></svg>
<div class="a row" style="left:1095.3px;top:597px;color:#cccccc">Acme.Net.Microservice.User.Default.Test</div>
<svg style="left:1055.0px;top:624px" width="8" height="12" viewBox="0 0 8 12"><path d="M1.5 1 L6.5 6 L1.5 11" stroke="#cccccc" stroke-width="1.1" fill="none"/></svg>
<svg style="left:1073.8px;top:622px" width="16" height="16" viewBox="0 0 16 16"><path d="M2.3 6.8 V4.4 A2 2 0 0 1 4.3 2.4 H10.8 A2 2 0 0 1 12.8 4.4 V11.3 A2 2 0 0 1 10.8 13.3 H7.2 M2.3 5.6 H12.8" fill="none" stroke="#c5c5c5" stroke-width="1.1"/>
  <path d="M0.2 8.1 H5.2 V8.9 H4.2 V11.6 H1.2 V8.9 H0.2 Z" fill="#c5c5c5"/>
  <path d="M2.2 9 V11.4 M3.2 9 V11.4" stroke="#252526" stroke-width="0.4" opacity="0.5"/>
  <rect x="-0.8" y="12.9" width="7" height="3" rx="1.3" fill="#c5c5c5"/></svg>
<div class="a row" style="left:1095.3px;top:619px;color:#cccccc">Acme.Net.Microservice.User.Domain.Test</div>
<svg style="left:1055.0px;top:646px" width="8" height="12" viewBox="0 0 8 12"><path d="M1.5 1 L6.5 6 L1.5 11" stroke="#cccccc" stroke-width="1.1" fill="none"/></svg>
<svg style="left:1073.8px;top:644px" width="16" height="16" viewBox="0 0 16 16"><path d="M2.3 6.8 V4.4 A2 2 0 0 1 4.3 2.4 H10.8 A2 2 0 0 1 12.8 4.4 V11.3 A2 2 0 0 1 10.8 13.3 H7.2 M2.3 5.6 H12.8" fill="none" stroke="#c5c5c5" stroke-width="1.1"/>
  <path d="M0.2 8.1 H5.2 V8.9 H4.2 V11.6 H1.2 V8.9 H0.2 Z" fill="#c5c5c5"/>
  <path d="M2.2 9 V11.4 M3.2 9 V11.4" stroke="#252526" stroke-width="0.4" opacity="0.5"/>
  <rect x="-0.8" y="12.9" width="7" height="3" rx="1.3" fill="#c5c5c5"/></svg>
<div class="a row" style="left:1095.3px;top:641px;color:#cccccc">Acme.Net.Microservice.User.gRpc.Test</div>
<svg style="left:1055.0px;top:668px" width="8" height="12" viewBox="0 0 8 12"><path d="M1.5 1 L6.5 6 L1.5 11" stroke="#cccccc" stroke-width="1.1" fill="none"/></svg>
<svg style="left:1073.8px;top:666px" width="16" height="16" viewBox="0 0 16 16"><path d="M2.3 6.8 V4.4 A2 2 0 0 1 4.3 2.4 H10.8 A2 2 0 0 1 12.8 4.4 V11.3 A2 2 0 0 1 10.8 13.3 H7.2 M2.3 5.6 H12.8" fill="none" stroke="#c5c5c5" stroke-width="1.1"/>
  <path d="M0.2 8.1 H5.2 V8.9 H4.2 V11.6 H1.2 V8.9 H0.2 Z" fill="#c5c5c5"/>
  <path d="M2.2 9 V11.4 M3.2 9 V11.4" stroke="#252526" stroke-width="0.4" opacity="0.5"/>
  <rect x="-0.8" y="12.9" width="7" height="3" rx="1.3" fill="#c5c5c5"/></svg>
<div class="a row" style="left:1095.3px;top:663px;color:#cccccc">Acme.Net.Microservice.User.Infrastructure.Test</div>
<svg style="left:1055.0px;top:690px" width="8" height="12" viewBox="0 0 8 12"><path d="M1.5 1 L6.5 6 L1.5 11" stroke="#cccccc" stroke-width="1.1" fill="none"/></svg>
<svg style="left:1073.8px;top:688px" width="16" height="16" viewBox="0 0 16 16"><path d="M2.3 6.8 V4.4 A2 2 0 0 1 4.3 2.4 H10.8 A2 2 0 0 1 12.8 4.4 V11.3 A2 2 0 0 1 10.8 13.3 H7.2 M2.3 5.6 H12.8" fill="none" stroke="#c5c5c5" stroke-width="1.1"/>
  <path d="M0.2 8.1 H5.2 V8.9 H4.2 V11.6 H1.2 V8.9 H0.2 Z" fill="#c5c5c5"/>
  <path d="M2.2 9 V11.4 M3.2 9 V11.4" stroke="#252526" stroke-width="0.4" opacity="0.5"/>
  <rect x="-0.8" y="12.9" width="7" height="3" rx="1.3" fill="#c5c5c5"/></svg>
<div class="a row" style="left:1095.3px;top:685px;color:#cccccc">Acme.Net.Microservice.User.Rest.Test</div>
<div class="a row" style="left:1410px;top:311px;color:#cca700">2</div>

<div class="a" style="left:1016px;top:753px;width:417px;height:1px;background:#474747"></div>
<div class="a" style="left:1016px;top:775px;width:417px;height:1px;background:#474747"></div>
<div class="a" style="left:1016px;top:797px;width:417px;height:1px;background:#474747"></div>
<svg style="left:1022px;top:759px" width="8" height="12" viewBox="0 0 8 12"><path d="M1.5 1 L6.5 6 L1.5 11" stroke="#cccccc" stroke-width="1.1" fill="none"/></svg>
<svg style="left:1022px;top:781px" width="8" height="12" viewBox="0 0 8 12"><path d="M1.5 1 L6.5 6 L1.5 11" stroke="#cccccc" stroke-width="1.1" fill="none"/></svg>
<svg style="left:1022px;top:803px" width="8" height="12" viewBox="0 0 8 12"><path d="M1.5 1 L6.5 6 L1.5 11" stroke="#cccccc" stroke-width="1.1" fill="none"/></svg>
<div class="a sechdr" style="left:1036px;top:753px;letter-spacing:-0.45px">ACME.NET.MICROSERVICE.USER</div>
<div class="a sechdr" style="left:1036px;top:775px;letter-spacing:-0.26px">OUTLINE</div>
<div class="a sechdr" style="left:1036px;top:797px;letter-spacing:-0.2px">TIMELINE</div>

<!-- ACTIVITY BAR -->
<div id="act"></div>
<div class="a" style="left:1480px;top:34px;width:1px;height:785px;background:#2a2a2a"></div>
<div class="a" style="left:1478.5px;top:35px;width:1.7px;height:47px;background:#ffffff"></div>
<svg style="left:1433px;top:34px" width="48" height="785" viewBox="0 0 48 785">
 <g fill="none" stroke-linejoin="round">
  <!-- files (active) -->
  <g stroke="#ffffff" stroke-width="1.9">
   <path d="M13.5 17.7 H14.2 A1.5 1.5 0 0 0 12.7 19.2 V33.9 A1.5 1.5 0 0 0 14.2 35.4 H26.5 A1.5 1.5 0 0 0 28 33.9 V29.7"/>
   <path d="M19.9 12 H29.5 L34.3 16.8 V28.2 A1.5 1.5 0 0 1 32.8 29.7 H19.9 A1.5 1.5 0 0 1 18.4 28.2 V13.5 A1.5 1.5 0 0 1 19.9 12 Z"/>
   <path d="M29.5 12 V16.8 H34.3" stroke-width="1.3"/>
  </g>
  <g stroke="#858585" stroke-width="1.75">
   <!-- search -->
   <circle cx="27" cy="68.2" r="7.2"/>
   <path d="M21.8 73.6 L13.8 82.2" stroke-width="1.9"/>
   <!-- scm -->
   <circle cx="18.5" cy="111.8" r="3"/>
   <circle cx="18.5" cy="128.2" r="3"/>
   <circle cx="29.1" cy="116.3" r="3"/>
   <path d="M18.5 114.8 V125.2 M29.1 119.3 Q29.1 122.6 25.6 122.6 H21.5 Q18.5 122.6 18.5 125.2"/>
   <!-- debug -->
   <path d="M20 167 L20 156 L36 166 L25.2 172.6"/>
   <path d="M14.5 176 A4 4.6 0 0 1 22.5 176 V178.5 A4 3.5 0 0 1 14.5 178.5 Z" stroke-width="1.5"/>
   <path d="M16 171.5 A2.5 2 0 0 1 21 171.5 M11.6 174.6 H14.3 M22.7 174.6 H25.4 M11.6 178 H14.3 M22.7 178 H25.4 M12.2 180.8 L14.5 179.5 M24.8 180.8 L22.5 179.5 M18.5 174 V180" stroke-width="1.3"/>
   <!-- extensions -->
   <rect x="25.9" y="204.3" width="10.2" height="9.8" rx="1.6"/>
   <path d="M21.4 218.3 V210 A1.6 1.6 0 0 0 19.8 208.4 H13.4 A1.6 1.6 0 0 0 11.8 210 V226.1 A1.6 1.6 0 0 0 13.4 227.7 H29.6 A1.6 1.6 0 0 0 31.2 226.1 V219.9 A1.6 1.6 0 0 0 29.6 218.3 H11.8 M21.4 218.3 V227.7"/>
   <!-- remote explorer -->
   <path d="M21.5 270.5 H13 V255 H33.8 V264"/>
   <path d="M17 273.6 H22" stroke-width="1.9"/>
   <circle cx="30" cy="269.6" r="6.2"/>
   <path d="M27.3 271.2 L29 269.6 M32.8 268 L31 269.6 M28.8 268.2 L27.2 269.6 M31.2 271 L32.6 269.6" stroke-width="1.1"/>
   <!-- solution graph -->
   <rect x="13.6" y="349.5" width="9.4" height="9" rx="1.8"/>
   <rect x="25.3" y="361" width="9.2" height="9" rx="1.8"/>
   <path d="M18.3 358.5 V363.7 Q18.3 365.8 20.4 365.8 H25.3"/>
   <!-- N> -->
   <path d="M12.6 414.8 V401.2 H16.6 L22 409.5 V401.2 H25.9 V414.8 H22 L16.6 406.5 V414.8 Z" stroke-width="1.3"/>
   <path d="M29 401 L35.6 405.5 L29 410" stroke-width="1.5"/>
   <rect x="28.6" y="412.6" width="7.4" height="2.8" rx="1.4" fill="#858585" stroke="none"/>
   <!-- chat -->
   <path d="M21 459.2 H18.5 L17 461.8 V459.2 H13.6 V446.2 H32.9 V454.9"/>
   <path d="M21.6 454.9 H34.4 V463.5 H31.5 L29.6 465.6 L27.7 463.5 H21.6 Z"/>
   <!-- testing diff -->
   <path d="M24 494 H16.9 A1.5 1.5 0 0 0 15.4 495.5 V512.4 A1.5 1.5 0 0 0 16.9 513.9 H29.4 A1.5 1.5 0 0 0 30.9 512.4 V501.6"/>
   <path d="M23.4 498.5 V506 M19.6 502.3 H27.2 M19.5 509 H27.3"/>
   <path d="M26.2 499.3 A3.2 3.2 0 0 1 32.5 498.2 M32.8 495 A3.2 3.2 0 0 0 26.5 496 M32.5 498.2 L33.1 496.5 M26.5 496 L25.8 497.9" stroke-width="1.2"/>
   <!-- flask -->
   <path d="M19 542 H28.8 M21.3 542 V548.5 L15.2 560 A1 1 0 0 0 16 561.6 H32 A1 1 0 0 0 32.8 560 L26.7 548.5 V542 M17.6 555.2 H30.4"/>
   <!-- accounts -->
   <circle cx="24" cy="712.6" r="11.3"/>
   <circle cx="24" cy="710" r="4.3"/>
   <path d="M16.2 720.6 A8.5 7 0 0 1 31.8 720.6"/>
   <!-- settings gear -->
   <path d="M21.88 752.88 L21.84 749.71 L26.16 749.71 L26.12 752.88 L28.10 753.70 L30.32 751.43 L33.37 754.48 L31.10 756.70 L31.92 758.68 L35.09 758.64 L35.09 762.96 L31.92 762.92 L31.10 764.90 L33.37 767.12 L30.32 770.17 L28.10 767.90 L26.12 768.72 L26.16 771.89 L21.84 771.89 L21.88 768.72 L19.90 767.90 L17.68 770.17 L14.63 767.12 L16.90 764.90 L16.08 762.92 L12.91 762.96 L12.91 758.64 L16.08 758.68 L16.90 756.70 L14.63 754.48 L17.68 751.43 L19.90 753.70 Z" stroke-width="1.6"/>
   <circle cx="24" cy="760.8" r="3.4"/>
  </g>
  <!-- docker whale -->
  <path d="M12.2 309.5 H31.2 Q32 307.2 33.6 306.8 Q34.4 308 33.8 309 Q35.2 309.3 35.6 308.8 Q34.8 311 33 311 Q30.3 321 20.8 321 Q13 321 12.2 309.5 Z" fill="#858585" stroke="none"/>
  <g fill="#858585" stroke="none">
   <rect x="14.5" y="305.6" width="2.4" height="2.5"/><rect x="17.5" y="305.6" width="2.4" height="2.5"/><rect x="20.5" y="305.6" width="2.4" height="2.5"/><rect x="23.5" y="305.6" width="2.4" height="2.5"/><rect x="26.5" y="305.6" width="2.4" height="2.5"/>
   <rect x="17.5" y="302.6" width="2.4" height="2.5"/><rect x="20.5" y="302.6" width="2.4" height="2.5"/><rect x="23.5" y="302.6" width="2.4" height="2.5"/>
   <rect x="23.5" y="299.6" width="2.4" height="2.5"/>
  </g>
  <!-- account badge -->
  <circle cx="32" cy="721.1" r="8" fill="#0078d4" stroke="none"/>
 </g>
 <text x="32" y="725.2" fill="#ffffff" font-family="Liberation Sans" font-weight="bold" font-size="11" text-anchor="middle">1</text>
</svg>


<!-- STATUS BAR -->
<div id="status"></div>
<div class="a" style="left:1461px;top:820px;width:20px;height:20px;background:#1a1a1a"></div>
<div class="a" style="left:1441px;top:819px;width:40px;height:21px;background:#007acc;border-bottom-right-radius:9px"></div>
<div class="a" style="left:0;top:832px;width:8px;height:8px;background:#1a1a1a"></div>
<div class="a" style="left:0;top:819px;width:33px;height:21px;background:#16825d;border-bottom-left-radius:5px"></div>
<div class="a" style="left:958px;top:819px;width:154px;height:21px;background:#003d66"></div>
<div class="a st" style="left:148px;top:819px">Projects: Acme.Net.Microservice.User.gRpc</div>
<div class="a st" style="left:389px;top:819px;letter-spacing:-0.32px">Debug Any CPU</div>
<div class="a st" style="left:968px;top:819px">Screen Reader Optimized</div>
<div class="a st" style="left:1120px;top:819px;letter-spacing:-0.32px">Ln 6, Col 2</div>
<div class="a st" style="left:1191px;top:819px;letter-spacing:-0.3px">Spaces: 4</div>
<div class="a st" style="left:1256px;top:819px;letter-spacing:-0.6px">UTF-8</div>
<div class="a st" style="left:1303px;top:819px;letter-spacing:-1.3px">CRLF</div>
<div class="a st" style="left:1364px;top:819px;letter-spacing:-0.5px">C#</div>
<div class="a st" style="left:58px;top:819px">0</div>
<div class="a st" style="left:86px;top:819px">2</div>
<div class="a st" style="left:125px;top:819px">0</div>

<svg style="left:0;top:819px" width="1481" height="21" viewBox="0 0 1481 21">
 <g fill="none" stroke="#ffffff">
  <!-- remote >< -->
  <path d="M11.8 7.9 L16.1 12.1 L11.8 16.3 M21 4.9 L17 8.6 L21 12.3" stroke-width="1.1"/>
  <!-- error -->
  <circle cx="48" cy="11.1" r="5.6" stroke-width="1.1"/>
  <path d="M45.6 8.7 L50.4 13.5 M50.4 8.7 L45.6 13.5" stroke-width="1.1"/>
  <!-- warning -->
  <path d="M75 5.4 L81 16.1 H69 Z" stroke-width="1.1" stroke-linejoin="round"/>
  <path d="M75 9 V12.6 M75 13.8 V14.9" stroke-width="1.1"/>
  <!-- broadcast -->
  <circle cx="115.3" cy="9.6" r="1.2" stroke-width="1"/>
  <path d="M115.3 10.9 L112.8 16.6 M115.3 10.9 L117.8 16.6 M113.5 14.8 H117.1" stroke-width="1.1"/>
  <path d="M113.1 6.8 A3.6 3.6 0 0 0 113.1 12 M117.5 6.8 A3.6 3.6 0 0 1 117.5 12 M111 5.2 A6.2 6.2 0 0 0 111 13.4 M119.6 5.2 A6.2 6.2 0 0 1 119.6 13.4" stroke-width="1"/>
  <!-- braces -->
  <path d="M1349 5.9 Q1347.2 5.9 1347.2 7.6 V9.6 Q1347.2 10.8 1345.6 10.9 Q1347.2 11 1347.2 12.2 V14.4 Q1347.2 16.1 1349 16.1 M1352 5.9 Q1353.8 5.9 1353.8 7.6 V9.6 Q1353.8 10.8 1355.4 10.9 Q1353.8 11 1353.8 12.2 V14.4 Q1353.8 16.1 1352 16.1" stroke-width="1.2"/>
  <!-- copilot -->
  <path d="M1393.7 11 Q1392.6 12 1392.6 13.9 Q1392.6 17.5 1399.6 17.5 Q1406.6 17.5 1406.6 13.9 Q1406.6 12 1405.5 11" stroke-width="1.7"/>
  <rect x="1393.8" y="6.3" width="5" height="4.6" rx="2.3" stroke-width="1.7"/>
  <rect x="1400.4" y="6.3" width="5" height="4.6" rx="2.3" stroke-width="1.7"/>
  <path d="M1397.9 12.6 V15.6 M1401.3 12.6 V15.6" stroke-width="1.6"/>
  <!-- C# dev kit hexagon -->
  <path d="M1429.3 4 L1435.5 7.5 V14.5 L1429.3 18 L1423.1 14.5 V7.5 Z" stroke-width="1.2"/>
  <path d="M1428.2 8.9 A2.1 2.2 0 1 0 1428.2 13.1" stroke-width="1.3"/>
  <path d="M1429.6 8.9 L1429.4 13.1 M1431.3 8.9 L1431.1 13.1 M1428.9 10.3 H1432.1 M1428.8 11.8 H1432" stroke-width="0.8"/>
  <!-- bell -->
  <path d="M1454 14.2 H1465 L1463.6 12.5 V9 A4.1 4.1 0 0 0 1455.4 9 V12.5 Z M1457.8 16 A1.8 1.8 0 0 0 1461.2 16" stroke-width="1.1" stroke-linejoin="round"/>
 </g>
</svg>

</body></html>
